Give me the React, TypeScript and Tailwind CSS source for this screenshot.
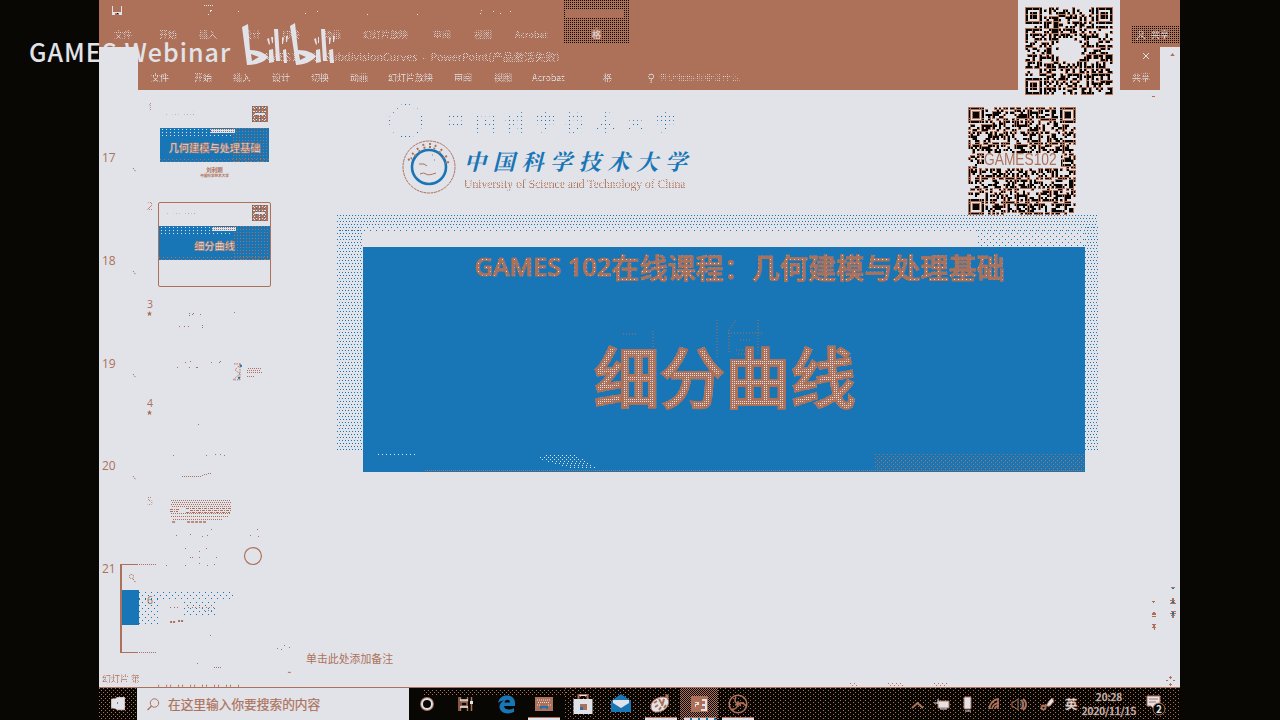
import React from "react";

const LIGHT = "#e2e3e9";
const BROWN = "#ad7159";
const BLUE = "#1976b6";
const INK = "#080704";

const sans = "font-['Noto_Sans_CJK_SC','Liberation_Sans',sans-serif]";
const halfMask =
  "[mask-image:conic-gradient(#000_25%,transparent_0_50%,#000_0_75%,transparent_0)] [mask-size:2px_2px]";
const denseMask =
  "[mask-image:conic-gradient(at_1px_1px,#000_75%,transparent_0)] [mask-size:2px_2px]";
const sparseMask =
  "[mask-image:conic-gradient(at_1px_1px,transparent_75%,#000_0)] [mask-size:3px_3px]";
const ghostMask =
  "[mask-image:conic-gradient(at_1px_1px,transparent_75%,#000_0)] [mask-size:4px_4px]";
const blueDots =
  "bg-[conic-gradient(at_1px_1px,transparent_75%,#1976b6_0),conic-gradient(at_1px_1px,transparent_75%,#1976b6_0)] bg-[length:6px_6px] [background-position:0_0,3px_3px]";
const blueDotsDense =
  "bg-[conic-gradient(at_1px_1px,transparent_75%,#1976b6_0),conic-gradient(at_1px_1px,transparent_75%,#1976b6_0)] bg-[length:3px_6px] [background-position:0_0,2px_3px]";
const brownDots =
  "bg-[conic-gradient(at_1px_1px,transparent_75%,#ad7159_0),conic-gradient(at_1px_1px,transparent_75%,#ad7159_0)] bg-[length:4px_4px] [background-position:0_0,2px_2px]";
const brownDotsDense =
  "bg-[conic-gradient(at_1px_1px,transparent_75%,#ad7159_0)] bg-[length:2px_2px]";
const inkDots =
  "bg-[conic-gradient(at_1px_1px,transparent_75%,#080704_0)] bg-[length:2px_2px]";

type Pt = [number, number];

function Specks({ pts, color = BROWN }: { pts: Pt[]; color?: string }) {
  return (
    <g fill={color} shapeRendering="crispEdges">
      {pts.map(([x, y], i) => (
        <rect key={i} x={x} y={y} width={1} height={1} />
      ))}
    </g>
  );
}

function buildCode(n: number, seed: number, clear: (x: number, y: number) => boolean, align: Pt[]) {
  let s = seed;
  const next = () => {
    s = (s + 0x6d2b79f5) | 0;
    let t = Math.imul(s ^ (s >>> 15), 1 | s);
    t = (t + Math.imul(t ^ (t >>> 7), 61 | t)) ^ t;
    return ((t ^ (t >>> 14)) >>> 0) / 4294967296;
  };
  const finder = (x: number, y: number) => {
    const inner = x >= 2 && x <= 4 && y >= 2 && y <= 4;
    return inner || x === 0 || x === 6 || y === 0 || y === 6;
  };
  const cells: Pt[] = [];
  for (let y = 0; y < n; y++) {
    for (let x = 0; x < n; x++) {
      let on = next() > 0.53;
      const fx = x < 8 ? x : x > n - 9 ? x - (n - 7) : -9;
      const fy = y < 8 ? y : y > n - 9 ? y - (n - 7) : -9;
      if (fx !== -9 && fy !== -9 && !(x > n - 9 && y > n - 9)) {
        on = fx >= 0 && fx < 7 && fy >= 0 && fy < 7 && finder(fx, fy);
      } else {
        for (const [ax, ay] of align) {
          const d = Math.max(Math.abs(x - ax), Math.abs(y - ay));
          if (d <= 2) on = d !== 1;
        }
        if (clear(x, y)) on = false;
      }
      if (on) cells.push([x, y]);
    }
  }
  return cells;
}

const groupCode = buildCode(37, 77, (x, y) => (x - 18.5) ** 2 + (y - 18) ** 2 < 30, [[30, 30]]);
const courseCode = buildCode(49, 4021, (x, y) => x > 6 && x < 42 && y > 20 && y < 28, [
  [24, 6],
  [24, 42],
  [42, 42],
]);

function Code({ cells, n, className }: { cells: Pt[]; n: number; className: string }) {
  return (
    <svg viewBox={`-0.2 -0.2 ${n + 0.4} ${n + 0.4}`} className={className} shapeRendering="crispEdges">
      {cells.map(([x, y], i) => (
        <rect key={`e${i}`} x={x - 0.2} y={y - 0.2} width={1.3} height={1.3} fill={BROWN} />
      ))}
      {cells.map(([x, y], i) => (
        <rect key={`c${i}`} x={x + 0.08} y={y + 0.08} width={0.85} height={0.85} fill={INK} />
      ))}
    </svg>
  );
}

const outerTabs: [string, string][] = [
  ["文件", "w-[45px]"],
  ["开始", "w-[40px]"],
  ["插入", "w-[44px]"],
  ["设计", "w-[39px]"],
  ["切换", "w-[41px]"],
  ["动画", "w-[40px]"],
  ["幻灯片放映", "w-[70px]"],
  ["审阅", "w-[41px]"],
  ["视图", "w-[41px]"],
  ["Acrobat", "w-[76px]"],
];

const innerTabs: [string, string][] = [
  ["文件", "w-[43px]"],
  ["开始", "w-[39px]"],
  ["插入", "w-[39px]"],
  ["设计", "w-[39px]"],
  ["切换", "w-[39px]"],
  ["动画", "w-[38px]"],
  ["幻灯片放映", "w-[66px]"],
  ["审阅", "w-[40px]"],
  ["视图", "w-[38px]"],
  ["Acrobat", "w-[71px]"],
];

function Ribbon() {
  return (
    <header className="relative h-[90px] shrink-0 text-[#e2e3e9]">
      <div className="flex h-[47px] flex-col bg-[#ad7159]">
        <svg viewBox="99 0 1081 24" className="h-[24px] w-full shrink-0" shapeRendering="crispEdges">
          <path d="M112 6h1v6h8V6h1v9h-2v-2h-6v2h-2zM114 12h1v3h-1zM119 12h1v3h-1z" fill={LIGHT} />
          <path d="M117 13h1v1h-1z" fill={INK} />
          <Specks
            color={LIGHT}
            pts={[[204, 5], [206, 5], [208, 5], [210, 5], [212, 5], [210, 10], [211, 10], [210, 11], [208, 14], [238, 11], [305, 13], [317, 11], [367, 14], [417, 14], [480, 13], [481, 10], [493, 11], [500, 13], [510, 11], [688, 33]]}
          />
        </svg>
        <div className={`flex h-[20px] items-center pl-[15px] text-[9px] leading-none whitespace-nowrap ${halfMask}`}>
          {outerTabs.map(([t, w]) => (
            <span key={t} className={`${w} shrink-0`}>
              {t}
            </span>
          ))}
        </div>
      </div>
      <div className="flex h-[43px]">
        <div className="w-[39px]" />
        <div className="flex w-[1022px] flex-col bg-[#ad7159]">
          <div className="flex h-[20px] items-center justify-between pl-[118px] pr-[10px]">
            <span className={`text-[10.7px] leading-none whitespace-nowrap ${halfMask}`}>
              GAMES102-8_SubdivisionCurves&nbsp; - &nbsp;PowerPoint(产品激活失败)
            </span>
            <svg viewBox="0 0 8 8" className="mt-[-3px] size-[8px]" shapeRendering="crispEdges">
              <path d="M1 1L7 7M7 1L1 7" stroke={LIGHT} strokeWidth="1" />
            </svg>
          </div>
          <div className={`flex h-[21px] items-center pl-[13px] text-[9px] leading-none whitespace-nowrap ${denseMask}`}>
            {innerTabs.map(([t, w]) => (
              <span key={t} className={`${w} shrink-0`}>
                {t}
              </span>
            ))}
            <span className="w-[44px] shrink-0">格</span>
            <svg viewBox="0 0 8 10" className="mr-[4px] h-[10px] w-[8px]" fill="none" stroke={LIGHT}>
              <circle cx="4" cy="3.5" r="2.5" />
              <path d="M4 6v4" />
            </svg>
            <span className={halfMask}>告诉我你想要做什么</span>
            <span className="ml-auto pr-[10px]">共享</span>
          </div>
        </div>
        <div className="flex w-[20px] justify-center">
          <svg viewBox="0 0 6 4" className="mt-[6px] ml-[4px] h-[3px] w-[5px]">
            <path d="M0 4L3 0L6 4z" fill={BROWN} />
          </svg>
        </div>
      </div>

      <div className={`absolute left-[465px] top-0 flex h-[44px] w-[65px] items-end justify-center pb-[4px] ${inkDots}`}>
        <span className="flex h-[12px] w-[11px] items-center justify-center rounded-full bg-[#ad7159] text-[9px] leading-none">格</span>
      </div>
      <div className="absolute left-[467px] top-[9px] h-[8px] w-[58px] bg-[#ad7159]" />
      <div className={`absolute left-[1033px] top-[26px] flex h-[17px] w-[48px] items-center gap-[5px] pl-[4px] text-[9px] leading-none ${inkDots}`}>
        <svg viewBox="0 0 10 10" className="size-[10px]" fill="none" stroke={LIGHT} strokeDasharray="2 1">
          <circle cx="5" cy="3" r="2" />
          <path d="M1 10c0-5 8-5 8 0" />
        </svg>
        <span className={denseMask}>共享</span>
      </div>
      <div className="absolute left-[919px] top-0 flex h-[96px] w-[102px] justify-center bg-[#e2e3e9] pt-[7px]">
        <Code cells={groupCode} n={37} className="size-[88px]" />
      </div>
    </header>
  );
}

function OuterNumbers() {
  return (
    <div className="flex w-[39px] shrink-0 flex-col pl-[3px] pt-[60px] text-[12px] font-medium leading-[16px] text-[#ad7159]">
      {["17", "18", "19", "20", "21"].map((n) => (
        <div key={n} className="flex h-[102.8px] shrink-0 flex-col">
          <span className="font-['Open_Sans','Noto_Sans',sans-serif]">{n}</span>
          <svg viewBox="0 0 5 6" className="ml-[30px] mt-[1px] h-[6px] w-[5px]">
            <path d="M1 1l3 4" stroke={BROWN} strokeDasharray="1.5 1" />
          </svg>
        </div>
      ))}
    </div>
  );
}

function MiniCode() {
  return (
    <div className="size-[16px] bg-[#ad7159]">
      <div className="flex size-[16px] items-center bg-[conic-gradient(at_1px_1px,transparent_75%,#1976b6_0),conic-gradient(at_1px_1px,transparent_75%,#e2e3e9_0),conic-gradient(at_1px_1px,transparent_75%,#e2e3e9_0)] bg-[length:4px_3px,3px_4px,5px_3px] [background-position:0_0,1px_1px,2px_2px]">
        <div className="ml-[3px] h-[2px] w-[10px] bg-[#e2e3e9]" />
      </div>
    </div>
  );
}

function BlueBand({ title, className }: { title: string; className: string }) {
  return (
    <div className={`relative flex h-[34px] items-center justify-center overflow-hidden bg-[#1976b6] ${className}`}>
      <div className="absolute left-[2px] top-[1px] h-[8px] w-[70px] bg-[conic-gradient(at_1px_1px,transparent_75%,#e2e3e9_0)] bg-[length:4px_3px]" />
      <div className="absolute right-0 top-0 h-full w-[36px] bg-[conic-gradient(at_1px_1px,transparent_75%,#ad7159_0)] bg-[length:3px_3px]" />
      <div className="absolute right-[34px] top-[1px] h-[4px] w-[24px] bg-[conic-gradient(at_1px_1px,#e2e3e9_75%,#ad7159_0)] bg-[length:2px_2px]" />
      <div className={`absolute bottom-0 right-0 h-[3px] w-full ${brownDots}`} />
      <span className="relative mt-[6px] text-[10.2px] font-bold leading-none whitespace-nowrap text-[#e2e3e9] [-webkit-text-stroke:0.5px_#ad7159]">
        {title}
      </span>
    </div>
  );
}

function Thumbs() {
  return (
    <div className="flex w-[154px] shrink-0 pl-[9px]">
      <div className="flex w-[11px] shrink-0 flex-col pt-[11px] font-['Open_Sans','Noto_Sans',sans-serif] text-[10.5px] font-medium leading-[12px] text-[#ad7159]">
        {["1", "2", "3", "4", "5", "6"].map((n) => (
          <div key={n} className="flex h-[98.6px] shrink-0 flex-col items-start">
            <span className={n === "1" || n === "2" || n === "5" ? halfMask : ""}>{n}</span>
            {(n === "3" || n === "4") && (
              <svg viewBox="0 0 5 5" className="mt-[1px] size-[5px]">
                <path d="M2.5 0l.8 1.7H5L3.7 3l.6 2-1.8-1.1L.7 5l.6-2L0 1.700h1.700z" fill={BROWN} />
              </svg>
            )}
          </div>
        ))}
      </div>
      <div className="flex flex-col">
        <div className="flex h-[112px] w-[113px] flex-col pt-[16px]">
          <div className="flex h-[22px] items-start justify-between pr-[3px]">
            <span className={`mt-[5px] ml-[8px] text-[5px] leading-none text-[#ad7159] ${sparseMask}`}>中国科学技术大学</span>
            <MiniCode />
          </div>
          <BlueBand title="几何建模与处理基础" className="ml-[2px] w-[109px]" />
          <div className="mt-[5px] flex flex-col items-center gap-[1px] font-bold text-[#ad7159]">
            <span className="text-[5.5px] leading-[6px]">刘利刚</span>
            <span className="text-[3.6px] leading-[4px]">中国科学技术大学</span>
          </div>
        </div>
        <div className="flex h-[85px] w-[113px] flex-col rounded-[2px] border border-[#ad7159] pt-[2px]">
          <div className="flex h-[21px] items-start justify-between pr-[2px]">
            <span className={`mt-[5px] ml-[8px] text-[5px] leading-none text-[#ad7159] ${sparseMask}`}>中国科学技术</span>
            <MiniCode />
          </div>
          <BlueBand title="细分曲线" className="w-[111px]" />
        </div>
        <svg viewBox="158 287 135 401" className="h-[401px] w-[135px]" fill="none">
          <Specks
            pts={[[189, 313], [189, 315], [192, 314], [193, 313], [200, 314], [234, 312], [179, 326], [184, 326], [188, 326], [202, 325], [202, 327], [185, 362], [190, 361], [189, 367], [196, 367], [197, 367], [211, 362], [220, 361], [219, 362], [177, 367], [198, 424], [173, 455], [206, 455], [215, 454], [220, 454], [224, 455], [176, 535], [190, 534], [202, 536], [207, 535], [211, 529], [250, 535], [258, 536], [257, 529], [185, 548], [206, 548], [199, 551], [190, 557], [192, 557], [199, 557], [216, 557], [185, 565], [199, 563], [207, 565], [214, 564], [166, 565], [210, 636], [197, 664], [277, 649], [281, 650], [284, 646], [289, 648]]}
          />
          <path d="M182 476.5h20M202 475.5l10-2M214 668.5h7" stroke={BROWN} strokeDasharray="1 1" shapeRendering="crispEdges" />
          <path d="M234 364h7l-6 6 5 4-7 6h7V364" stroke={BROWN} strokeDasharray="1.5 1" />
          <path d="M248 368.5h14M247 370.5h14M247 372.5h16M247 376.500h8" stroke={BROWN} strokeDasharray="1 1" shapeRendering="crispEdges" />
          <rect x="240" y="365" width="2" height="2" fill={BLUE} />
          <rect x="238" y="377" width="2" height="2" fill={BLUE} />
          <path d="M171 500.5h60M172 502.5h60M171 504.5h60M172 506.5h60M171 513.5h60M171 516.5h58M173 519.5h50" stroke={BROWN} strokeDasharray="1 1" shapeRendering="crispEdges" />
          <path d="M170 509.5h10M186 508.5h45M170 511.5h8M190 510.500h41M186 512.500h44" stroke={BROWN} strokeWidth="1" strokeDasharray="3 1 1 1" shapeRendering="crispEdges" />
          <path d="M172 522.5h4M187 522.5h20" stroke={BROWN} strokeWidth="1.500" strokeDasharray="3 1" />
          <circle cx="253" cy="556.5" r="8.5" stroke={BROWN} strokeWidth="1.2" />
          <path d="M170 608.5h9M188 608.5h26M204 611.500h8" stroke={BROWN} strokeDasharray="1 3 1 2" shapeRendering="crispEdges" />
          <path d="M170 622.5h5M178 621.5h6" stroke={BROWN} strokeWidth="2" strokeDasharray="2 1" />
          <path d="M158 686.5h82" stroke={BROWN} strokeDasharray="1 7 1 3" strokeWidth="2" />
          <path d="M288 673h3" stroke={BROWN} />
        </svg>
      </div>
    </div>
  );
}

function SlideHeader() {
  return (
    <div className="flex h-[125px] justify-between pl-[82px] pr-[72px]">
      <div className="relative flex pl-[20px] pt-[49px]">
        <div className={`absolute left-[8px] top-[14px] flex items-center gap-[22px] ${ghostMask}`}>
          <span className="size-[34px] rounded-full border-2 border-[#1976b6]" />
          <span className="text-[21px] font-bold leading-none tracking-[9px] whitespace-nowrap text-[#1976b6]">中国科学技术大学</span>
        </div>
        <svg viewBox="402 139 56 56" className="h-[56px] w-[56px]" fill="none">
          <circle cx="430" cy="167" r="26" stroke={BROWN} strokeDasharray="3 .6" />
          <circle cx="430" cy="167" r="17" stroke={BLUE} strokeWidth="2.6" />
          <path d="M409 160l4-2M413 153l4 3M418 148l3 4M424 144l2 5M431 143v5M437 145l-2 4M443 149l-3 4M448 156l-4 2M450 162l-4 1" stroke={BROWN} strokeWidth="2" strokeDasharray="2 1" />
          <path d="M420 164h5l3 2M421 174q4-2 6 0t10-1M433 155h1M435 160h1" stroke={BROWN} />
        </svg>
        <div className="ml-[7px] flex w-[226px] flex-col pt-[8px]">
          <span className="flex justify-between pr-[3px] font-['Noto_Serif_CJK_SC','Noto_Sans_CJK_SC',serif] text-[22px] font-bold leading-[28px] text-[#1976b6] italic">
            {"中国科学技术大学".split("").map((c, i) => (
              <span key={i}>{c}</span>
            ))}
          </span>
          <span className={`mt-[3px] font-['Liberation_Serif',serif] text-[11.650px] leading-[14px] whitespace-nowrap text-[#ad7159] ${denseMask}`}>
            University of Science and Technology of China
          </span>
        </div>
      </div>
      <div className="relative mt-[17px] size-[108px]">
        <Code cells={courseCode} n={49} className="size-[108px]" />
        <span className="absolute left-[16px] top-[46px] flex h-[14px] w-[77px] items-center bg-[#e2e3e9]">
          <span className="origin-left scale-x-[0.86] font-['Liberation_Sans',sans-serif] text-[16px] leading-[14px] text-[#ad7159]">
            GAMES102
          </span>
        </span>
      </div>
    </div>
  );
}

function Slide() {
  return (
    <div className="flex min-w-0 flex-1 flex-col">
      <div className="pl-[7px]">
        <SlideHeader />
      </div>
      <div className="relative ml-[45px] h-[257px] w-[761px] pl-[26px] pt-[32px]">
        <div className={`absolute left-0 top-0 h-[12px] w-[761px] ${blueDotsDense}`} />
        <div className={`absolute left-0 top-[12px] h-[4px] w-[761px] ${blueDots}`} />
        <div className={`absolute left-0 top-[12px] h-[225px] w-[26px] ${blueDotsDense}`} />
        <div className={`absolute right-0 top-[12px] h-[225px] w-[13px] ${blueDotsDense}`} />
        <div className={`absolute right-[13px] top-[15px] h-[17px] w-[107px] ${blueDots}`} />
        <div className="relative flex h-[225px] w-[722px] flex-col items-center bg-[#1976b6]">
          <div className={`absolute bottom-0 right-0 h-[18px] w-[210px] ${brownDots}`} />
          <div className={`absolute bottom-0 right-0 h-[2px] w-[660px] ${brownDotsDense}`} />
          <svg viewBox="363 453 240 17" className="absolute bottom-[2px] left-0 h-[17px] w-[240px]" shapeRendering="crispEdges">
            <path d="M378 454.5h37M546 455.5h31M540 457.5h40M542 459.5h42M548 461.5h38M555 463.5h34M562 465.5h30M570 467.5h26" stroke={LIGHT} strokeDasharray="1 3" />
          </svg>
          <svg viewBox="620 318 150 42" className="absolute left-[257px] top-[71px] h-[42px] w-[150px]" fill="none" stroke={BROWN} strokeDasharray="1 2">
            <path d="M623 334h15M624 350h16M653 331v20M717 320v38M729 330v24M728 333h35M736 320l-8 12M758 320v36M740 340h12M736 350h16M738 354h14" />
          </svg>
          <div className="ml-[31px] mt-[4px] flex h-[32px] items-center whitespace-nowrap text-[28.1px] font-medium leading-none text-transparent [-webkit-text-stroke:0.6px_#ad7159] bg-[conic-gradient(at_1px_1px,#ad7159_75%,#e2e3e9_0)] bg-[length:4px_4px] bg-clip-text">
            <span className="font-['Open_Sans',sans-serif] text-[25.4px] font-semibold">GAMES 102</span>
            <span>在线课程：几何建模与处理基础</span>
          </div>
          <div className="ml-[2px] mt-[58px] bg-[conic-gradient(at_1px_1px,#ad7159_75%,#e2e3e9_0)] bg-[length:2px_2px] bg-clip-text text-[65.5px] font-medium leading-[68px] whitespace-nowrap text-transparent [-webkit-text-stroke:2px_#ad7159]">
            细分曲线
          </div>
        </div>
      </div>
      <div className="flex flex-1 flex-col pl-[14px] pt-[178px]">
        <span className="text-[10.9px] leading-[16px] text-[#ad7159]">单击此处添加备注</span>
        <div className="mt-auto flex justify-end gap-[30px] pr-[200px]">
          <span className={`h-[3px] w-[8px] ${brownDots}`} />
          <span className={`h-[4px] w-[16px] ${brownDots}`} />
          <span className={`h-[4px] w-[14px] ${brownDots}`} />
        </div>
      </div>
    </div>
  );
}

function SideArrows() {
  return (
    <svg viewBox="1148 90 32 598" className="h-[598px] w-[32px] shrink-0" shapeRendering="crispEdges" fill={BROWN}>
      <path d="M1152 96h3v1h-3zM1152 601h3v1h-3zM1153 602h1v1h-1zM1153 612h2v1h-2zM1152 613h4v2h-4zM1152 616h4v1h-4zM1152 624h4v1h-4zM1153 625h2v2h-2zM1152 627h4v1h-4zM1154 628h1v2h-1z" />
      <path d="M1171 587h4v1h-4zM1172 598h2v2h-2zM1170 600h5v1h-5zM1171 602h4v1h-4zM1170 603h6v1h-6zM1171 611h5v1h-5zM1170 613h6v1h-6zM1171 615h4v1h-4zM1172 616h2v2h-2z" />
      <path d="M1172 588h2v1h-2zM1172 601h2v2h-2zM1172 612h2v3h-2z" fill={BLUE} />
      <path d="M1169 677h3v1h-3zM1170 676h1v3h-1zM1169 684h3v1h-3zM1170 683h1v3h-1zM1166 680h2v1h-2zM1173 680h2v1h-2z" />
    </svg>
  );
}

const ic = "h-[22px] w-[24px]";

function Apps() {
  const cells: { icon: React.ReactNode; active?: boolean; line?: boolean }[] = [
    { icon: <svg viewBox="0 0 24 22" className={ic} fill="none"><circle cx="12" cy="11" r="6.2" stroke={BROWN} strokeWidth="1.4" /><circle cx="12" cy="11" r="5" stroke={LIGHT} strokeWidth="2" /></svg> },
    { icon: <svg viewBox="0 0 24 22" className={ic} fill="none"><path d="M6.5 4v4h7V4M6.5 18v-4h7v4M7 9h6v4H7z" stroke={BROWN} strokeWidth="1.4" /><path d="M6 7h8M6 14h8" stroke={LIGHT} strokeWidth="1.300" /><path d="M5 4v14M17.5 4v14" stroke={BROWN} strokeWidth="1.5" /><path d="M16 8h3v3h-3z" fill={LIGHT} /></svg> },
    { icon: <svg viewBox="0 0 24 22" className={ic}><path d="M5 10C6 5 9 2.500 14 2.500C19 2.500 22 6 22 10v3H11c.3 4 6 4.500 10 2v4C14 22 7 20 6.500 14c0-3 2-5.500 4.500-6.500C9 7.500 6.500 8.500 5 10zm6.500-.5H17C17 5.500 12 6 11.500 9.500z" fill={BLUE} /></svg> },
    { line: true, icon: <svg viewBox="0 0 24 22" className={ic}><path d="M3 4h18v14H3z" fill={BROWN} /><path d="M5 7h14M6 9.500h12M5 12h3M16 12h3" stroke={LIGHT} strokeWidth="1.2" strokeDasharray="1 1" /><path d="M8 16v-3h8v3h-2v-1h-4v1z" fill={BLUE} /></svg> },
    { icon: <svg viewBox="0 0 24 22" className={ic}><path d="M2.500 6h19v15h-19z" fill={LIGHT} /><path d="M7.500 6V2h9v4" fill="none" stroke={BROWN} strokeWidth="2" /><path d="M8.500 2.500h7" stroke={LIGHT} /><path d="M9 11h7v6H9z" fill={BROWN} /><path d="M9 14h3v3H9z" fill={BLUE} /></svg> },
    { icon: <svg viewBox="0 0 24 22" className={ic}><path d="M2 8L12 1l10 7v11H2z" fill={BLUE} /><path d="M4 7h16v3l-8 5-8-5z" fill={LIGHT} /></svg> },
    { line: true, icon: <svg viewBox="0 0 24 22" className={ic}><path d="M17 1c4 0 5 3 2 5z" fill={BROWN} /><path d="M3 15C2 8 9 4 15 4c6 0 7 5 4 10s-15 8-16 1z" fill={LIGHT} stroke={BROWN} /><path d="M6 10l3-2M11 6l3 5M16 6l-2 7M7 14l3-2M11 17l2-3M16 15l2-3" stroke={BROWN} strokeWidth="2" /></svg> },
    { active: true, line: true, icon: <svg viewBox="0 0 24 22" className={ic}><path d="M4 3h17v16H4z" fill={BROWN} /><path d="M8 9h4v3H9v2H8v-3h2v-1H8zM15 6h5v12h-6v-2h4v-3h-3v-2h3V8h-3z" fill={LIGHT} /></svg> },
    { line: true, icon: <svg viewBox="0 0 24 22" className={ic} fill="none" stroke={BROWN}><circle cx="12" cy="11" r="8.800" strokeWidth="1.600" /><path d="M12 11c-3-1-4-4-2-7M12 11c3-2 6-1 8 2M12 11c0 3-3 6-6 5M12 11v-3M12 11l3 2M12 11l-3 1" strokeWidth="1.500" /></svg> },
  ];
  return (
    <div className="-ml-[1px] flex h-full">
      {cells.map((c, i) => (
        <div
          key={i}
          className={`relative flex h-full w-[38.8px] items-center justify-center ${c.active ? "bg-[conic-gradient(#ad7159_25%,#080704_0_50%,#ad7159_0_75%,#080704_0)] bg-[length:2px_2px]" : ""}`}
        >
          {c.icon}
          {c.line && (
            <span
              className={`absolute bottom-0 left-[4px] h-[3px] w-[32px] border-t border-[#ad7159] ${c.active ? "bg-[repeating-linear-gradient(90deg,#e2e3e9_0_6px,#1976b6_6px_8px)]" : "bg-[#e2e3e9]"}`}
            />
          )}
        </div>
      ))}
    </div>
  );
}

function Tray() {
  return (
    <div className="flex h-full w-[272px] items-center">
      <svg viewBox="908 690 155 28" className="h-[28px] w-[155px]" fill="none" stroke={LIGHT}>
        <path d="M912 708l5.500-5 5.500 5" stroke={BROWN} strokeWidth="2" />
        <path d="M938 701h11v7h-11z" fill={LIGHT} stroke={BROWN} />
        <path d="M938 699v5M934 703h4M940 709h7" />
        <rect x="964" y="697" width="7" height="12" rx="1" fill={LIGHT} stroke={BROWN} />
        <path d="M965 711h6" />
        <path d="M989 709C990 703 994 699 999 699M992 709c0-3 3-6 7-6M995 709c0-2 2-3 4-3M998 699v10" stroke={BROWN} strokeWidth="1.800" />
        <path d="M1012 702h2l4-3v11l-4-3h-2z" stroke={BROWN} />
        <path d="M1021 700c3 2 3 7 0 9M1023 699c4 3 4 8 0 11" stroke={BROWN} strokeWidth="2" />
        <path d="M1021 702v5" stroke={BLUE} />
        <circle cx="1043.500" cy="707.500" r="2" stroke={BROWN} strokeWidth="2" />
        <path d="M1046 706l3-5 3-3 2 3-4 5z" fill={LIGHT} stroke={BROWN} />
      </svg>
      <span className="ml-[2px] w-[15px] text-[12.500px] font-bold leading-none text-[#e2e3e9] [-webkit-text-stroke:0.4px_#ad7159]">英</span>
      <div className="ml-[3px] flex w-[52px] flex-col items-center text-[10.2px] font-medium leading-[14px] text-[#e2e3e9] [-webkit-text-stroke:0.3px_#ad7159]">
        <span>20:28</span>
        <span>2020/11/15</span>
      </div>
      <div className="relative ml-[9px] flex h-[24px] w-[22px]">
        <svg viewBox="0 0 22 24" className="h-[24px] w-[22px]" fill="none">
          <path d="M3 4h13v10h-3v2H9l-2-2H3z" fill={LIGHT} stroke={BROWN} />
          <path d="M5 7h9M5 10h7" stroke={BROWN} />
          <circle cx="15" cy="17" r="6" fill={INK} stroke={BROWN} />
        </svg>
        <span className="absolute left-[12px] top-[12px] text-[10px] font-bold leading-[10px] text-[#e2e3e9]">2</span>
      </div>
    </div>
  );
}

function Taskbar() {
  return (
    <footer className="flex h-[33px] shrink-0 border-t border-[#ad7159] bg-[#080704]">
      <div className={`flex w-[38px] items-center justify-center ${brownDots}`}>
        <svg viewBox="0 0 14 14" className="size-[14px]">
          <path d="M0 2l5-.8L6 0h8v13H6l-1-1-5-1z" fill={LIGHT} stroke={BROWN} strokeWidth=".6" />
          <path d="M6 5h1v2H6z" fill={BROWN} />
        </svg>
      </div>
      <div className="flex w-[272px] items-center bg-[#e2e3e9] pl-[10px]">
        <svg viewBox="0 0 13 13" className="size-[13px]" fill="none" stroke={BROWN}>
          <circle cx="7.500" cy="5" r="4.200" />
          <path d="M4.500 8L.5 12" strokeWidth="1.300" />
        </svg>
        <span className="ml-[8px] text-[12.700px] leading-none whitespace-nowrap text-[#ad7159] [-webkit-text-stroke:0.2px_#ad7159]">在这里输入你要搜索的内容</span>
      </div>
      <div className="relative flex flex-1 justify-between">
        <div className={`absolute left-[15px] top-[2px] h-[5px] w-[150px] ${brownDots}`} />
        <div className="absolute right-0 top-0 h-full w-[615px] bg-[conic-gradient(at_1px_1px,transparent_75%,#ad7159_0),conic-gradient(at_1px_1px,transparent_75%,#ad7159_0)] bg-[length:5px_4px] [background-position:0_0,3px_2px]" />
        <div className="relative">
          <Apps />
        </div>
        <div className="relative">
          <Tray />
        </div>
      </div>
    </footer>
  );
}

function LowerFrame() {
  return (
    <div className="absolute left-[21px] top-[564px] h-[89px] w-[116px]">
      <div className="h-full w-[17px] border border-r-0 border-l-2 border-[#ad7159] pt-[25px]">
        <div className="h-[35px] w-[17px] bg-[#1976b6]" />
      </div>
      <div className={`absolute left-[17px] top-0 h-[1px] w-[20px] ${brownDotsDense}`} />
      <div className={`absolute bottom-0 left-[17px] h-[1px] w-[20px] ${brownDotsDense}`} />
      <div className={`absolute left-[19px] top-[28px] h-[7px] w-[96px] ${blueDots}`} />
      <div className={`absolute left-[19px] top-[35px] h-[26px] w-[20px] ${blueDots}`} />
      <div className={`absolute left-[64px] top-[38px] h-[14px] w-[32px] ${blueDots}`} />
      <div className="absolute left-[9px] top-[10px] size-[5px] rounded-full border border-dotted border-[#ad7159]" />
    </div>
  );
}

function Watermark() {
  return (
    <div className="absolute left-[29px] top-[22px] flex h-[46px] items-start">
      <span className="mt-[18px] w-[213px] text-[25px] font-medium leading-[22px] tracking-[1px] whitespace-nowrap text-[#e2e3e9]">
        GAMES Webinar
      </span>
      <svg viewBox="242 22 96 46" className="h-[46px] w-[96px]">
        <g fill={LIGHT}>
          <path d="M242 27l6-3 2 26c9 0 16 4 18 7-3 5-12 8-21 8z" />
          <path d="M290 26l5-3 3 27c9 0 15 3 18 6-3 5-12 9-20 9z" />
          <path d="M274 29h4l2 32h-4zM321 29h4l2 32h-4z" />
          <path d="M269 50l4-1 1 13-5 1zM283 50l3-1 1 14h-3zM316 50l4-1 1 13-5 1zM329 50l4-1 1 14h-4z" />
          <path d="M267 39l2-1 1 6-1 1zM271 37h2v6h-1zM282 37l2 1-1 6h-1zM286 36h2l-1 6h-1zM314 39l2-1 1 6-1 1zM318 37h1v6h-1zM329 37l2 1-1 6h-1zM333 36h2l-1 6h-1z" />
        </g>
        <path d="M251 54l8 3-7 4zM299 54l7 3-6 3z" fill={BROWN} />
      </svg>
    </div>
  );
}

export default function App() {
  return (
    <div className={`relative flex h-[720px] w-[1280px] overflow-hidden bg-[#080704] ${sans}`}>
      <div className="w-[99px] shrink-0" />
      <main className="relative flex w-[1081px] shrink-0 flex-col bg-[#e2e3e9]">
        <Ribbon />
        <section className="relative flex h-[597px] shrink-0 overflow-hidden">
          <OuterNumbers />
          <Thumbs />
          <Slide />
          <SideArrows />
          <span className={`absolute bottom-[1px] left-[3px] w-[37px] overflow-hidden text-[9px] leading-[14px] whitespace-nowrap text-[#ad7159] ${denseMask}`}>幻灯片 第</span>
        </section>
        <Taskbar />
        <LowerFrame />
      </main>
      <Watermark />
    </div>
  );
}
